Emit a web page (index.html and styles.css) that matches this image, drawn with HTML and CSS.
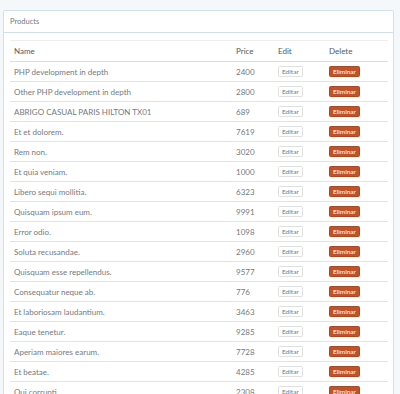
FILE: index.html
```html
<!DOCTYPE html>
<html lang="en">
<head>
    <meta charset="UTF-8">
    <meta name="viewport" content="width=device-width, initial-scale=1.0">
    <title>Products</title>
    <link rel="stylesheet" href="styles.css">
</head>
<body>
    <!-- Products panel -->
    <div class="panel">
        <div class="panel-heading">Products</div>
        <div class="panel-body">
            <table class="table">
                <thead>
                    <tr>
                        <th class="col-name">Name</th>
                        <th class="col-price">Price</th>
                        <th class="col-edit">Edit</th>
                        <th class="col-delete">Delete</th>
                    </tr>
                </thead>
                <tbody>
                    <tr><td>PHP development in depth</td><td>2400</td><td><a class="btn btn-default" href="#">Editar</a></td><td><a class="btn btn-danger" href="#">Eliminar</a></td></tr>
                    <tr><td>Other PHP development in depth</td><td>2800</td><td><a class="btn btn-default" href="#">Editar</a></td><td><a class="btn btn-danger" href="#">Eliminar</a></td></tr>
                    <tr><td>ABRIGO CASUAL PARIS HILTON TX01</td><td>689</td><td><a class="btn btn-default" href="#">Editar</a></td><td><a class="btn btn-danger" href="#">Eliminar</a></td></tr>
                    <tr><td>Et et dolorem.</td><td>7619</td><td><a class="btn btn-default" href="#">Editar</a></td><td><a class="btn btn-danger" href="#">Eliminar</a></td></tr>
                    <tr><td>Rem non.</td><td>3020</td><td><a class="btn btn-default" href="#">Editar</a></td><td><a class="btn btn-danger" href="#">Eliminar</a></td></tr>
                    <tr><td>Et quia veniam.</td><td>1000</td><td><a class="btn btn-default" href="#">Editar</a></td><td><a class="btn btn-danger" href="#">Eliminar</a></td></tr>
                    <tr><td>Libero sequi mollitia.</td><td>6323</td><td><a class="btn btn-default" href="#">Editar</a></td><td><a class="btn btn-danger" href="#">Eliminar</a></td></tr>
                    <tr><td>Quisquam ipsum eum.</td><td>9991</td><td><a class="btn btn-default" href="#">Editar</a></td><td><a class="btn btn-danger" href="#">Eliminar</a></td></tr>
                    <tr><td>Error odio.</td><td>1098</td><td><a class="btn btn-default" href="#">Editar</a></td><td><a class="btn btn-danger" href="#">Eliminar</a></td></tr>
                    <tr><td>Soluta recusandae.</td><td>2960</td><td><a class="btn btn-default" href="#">Editar</a></td><td><a class="btn btn-danger" href="#">Eliminar</a></td></tr>
                    <tr><td>Quisquam esse repellendus.</td><td>9577</td><td><a class="btn btn-default" href="#">Editar</a></td><td><a class="btn btn-danger" href="#">Eliminar</a></td></tr>
                    <tr><td>Consequatur neque ab.</td><td>776</td><td><a class="btn btn-default" href="#">Editar</a></td><td><a class="btn btn-danger" href="#">Eliminar</a></td></tr>
                    <tr><td>Et laboriosam laudantium.</td><td>3463</td><td><a class="btn btn-default" href="#">Editar</a></td><td><a class="btn btn-danger" href="#">Eliminar</a></td></tr>
                    <tr><td>Eaque tenetur.</td><td>9285</td><td><a class="btn btn-default" href="#">Editar</a></td><td><a class="btn btn-danger" href="#">Eliminar</a></td></tr>
                    <tr><td>Aperiam maiores earum.</td><td>7728</td><td><a class="btn btn-default" href="#">Editar</a></td><td><a class="btn btn-danger" href="#">Eliminar</a></td></tr>
                    <tr><td>Et beatae.</td><td>4285</td><td><a class="btn btn-default" href="#">Editar</a></td><td><a class="btn btn-danger" href="#">Eliminar</a></td></tr>
                    <tr><td>Qui corrupti.</td><td>2308</td><td><a class="btn btn-default" href="#">Editar</a></td><td><a class="btn btn-danger" href="#">Eliminar</a></td></tr>
                </tbody>
            </table>
        </div>
    </div>
</body>
</html>
```

FILE: styles.css
```css
/* Basic Reset */
* {
    margin: 0;
    padding: 0;
    box-sizing: border-box;
}

body {
    font-family: Lato, "Open Sans", sans-serif;
    font-size: 8px;
    color: #747a7e;
    background-color: #f5f8fa;
    padding: 10px 6px 0 3px;
}

/* Panel */
.panel {
    background-color: #ffffff;
    border: 1px solid #d3e0e9;
    border-bottom: 0;
    border-radius: 2px 2px 0 0;
}

.panel-heading {
    height: 22px;
    line-height: 21px;
    padding: 0 6px;
    border-bottom: 1px solid #d3e0e9;
    background-color: #ffffff;
    font-size: 7.5px;
}

.panel-body {
    padding: 7px 5px 0 6px;
}

/* Table */
.table {
    width: 100%;
    border-collapse: collapse;
    table-layout: fixed;
}

.table th,
.table td {
    text-align: left;
    font-weight: 400;
    padding: 0 4px;
    vertical-align: middle;
    white-space: nowrap;
}

.table th {
    height: 21px;
    font-size: 8px;
    color: #555a5e;
    border-top: 1px solid #eeeeee;
    border-bottom: 1.5px solid #dddddd;
}

.table td {
    height: 20px;
    border-bottom: 1px solid #e3e3e3;
}

.col-name { width: 222px; }
.col-price { width: 42px; }
.col-edit { width: 51px; }
.col-delete { width: 63px; }

/* Buttons */
.btn {
    display: inline-block;
    height: 11px;
    line-height: 9px;
    padding: 0 3px;
    font-size: 6.5px;
    border: 1px solid transparent;
    border-radius: 1.5px;
    text-decoration: none;
}

.btn-default {
    color: #747a7e;
    background-color: #ffffff;
    border-color: #e0e0e0;
}

.btn-danger {
    color: #ffffff;
    background-color: #bf5329;
    border-color: #aa4a24;
}
```
